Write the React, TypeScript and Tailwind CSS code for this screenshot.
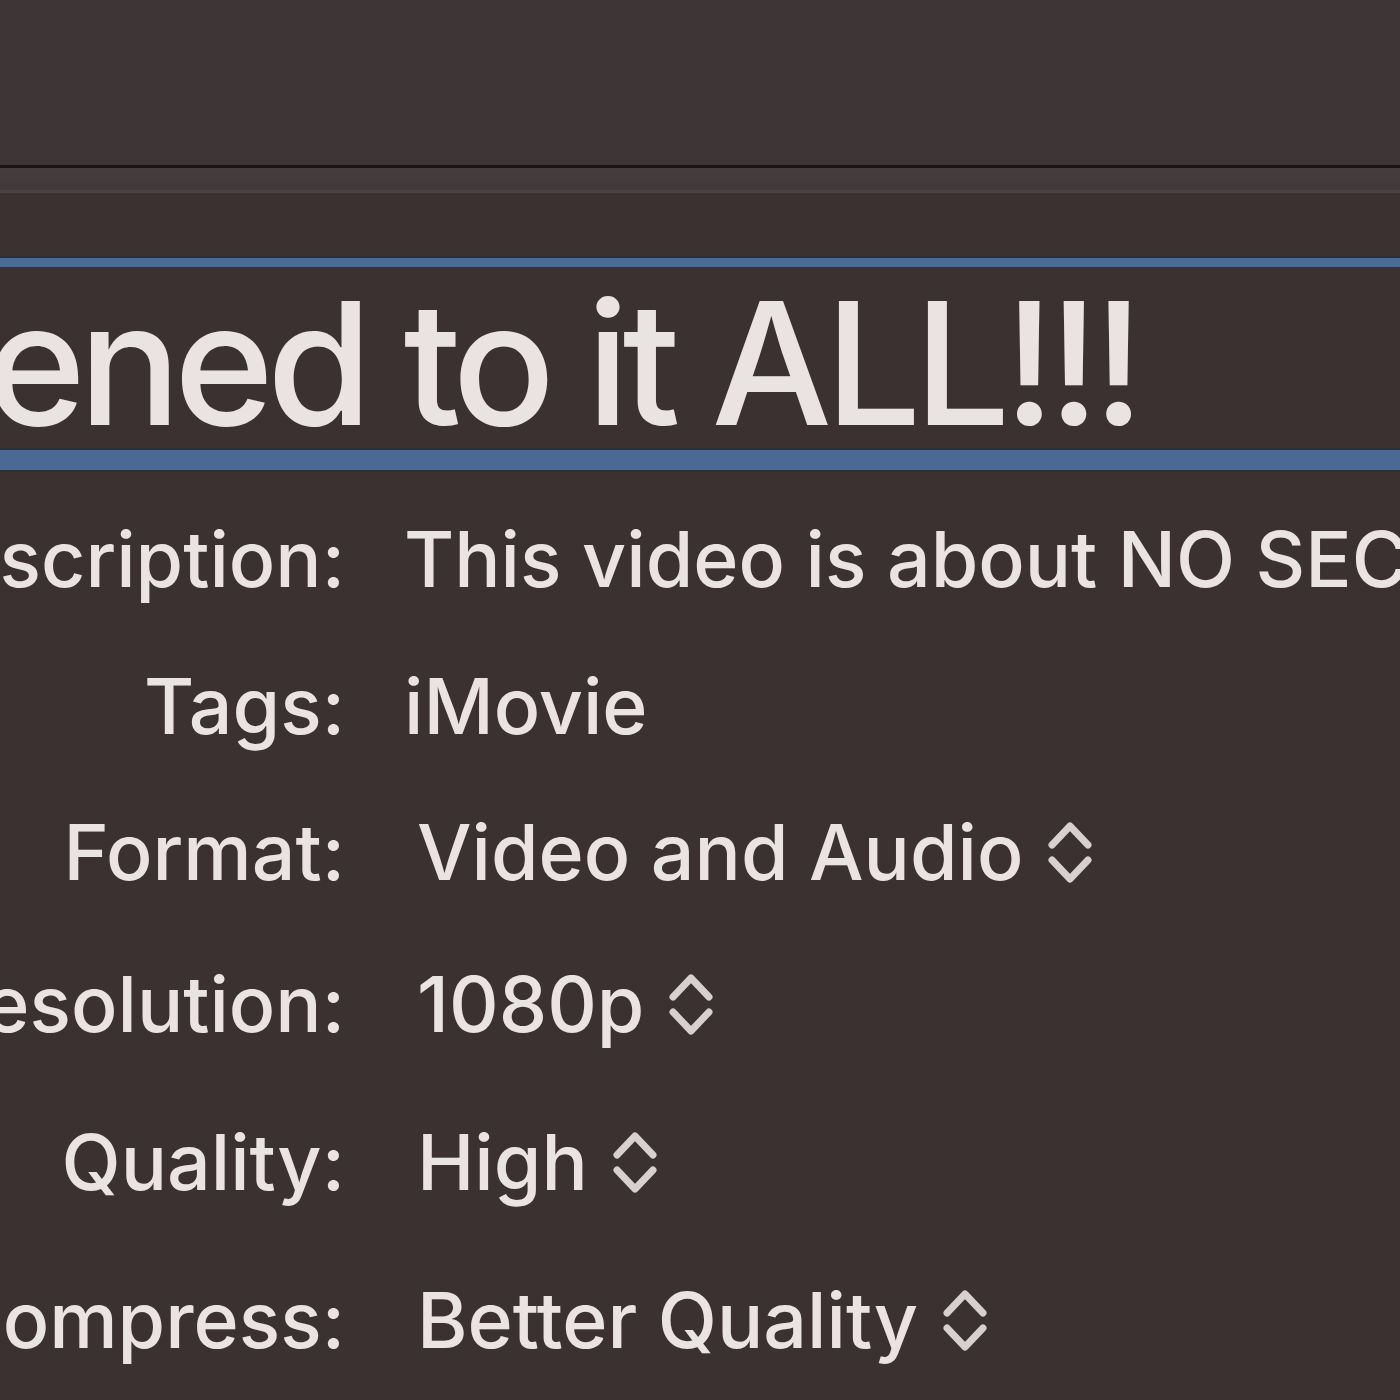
import React from "react";

const font = { fontFamily: 'Inter, "Liberation Sans", Arial, sans-serif' };

function Chevrons() {
  return (
    <svg width="46" height="70" viewBox="0 0 46 70" className="shrink-0">
      <path
        d="M5 28 L23 9 L41 28 M5 43 L23 62 L41 43"
        fill="none"
        stroke="#d7d0ce"
        strokeWidth="7"
        strokeLinecap="round"
        strokeLinejoin="round"
      />
    </svg>
  );
}

function Row({
  label,
  value,
  popup,
  height,
}: {
  label: string;
  value: string;
  popup?: boolean;
  height: string;
}) {
  return (
    <div className={`flex items-center ${height}`}>
      <div className="flex w-[345px] shrink-0 justify-end">
        <span className="shrink-0 whitespace-nowrap">{label}</span>
      </div>
      <div
        className={`ml-[59px] flex min-w-0 items-center gap-[24px] whitespace-nowrap ${
          popup ? "pl-[13px]" : ""
        }`}
      >
        <span>{value}</span>
        {popup && <Chevrons />}
      </div>
    </div>
  );
}

export default function App() {
  return (
    <div
      className="h-[1400px] w-[1400px] overflow-hidden bg-[#3a3130] text-[#e9e3e1]"
      style={font}
    >
      {/* window toolbar */}
      <div className="h-[165px] bg-[#3e3636]" />
      <div className="h-[3px] bg-[#1b1313]" />
      <div className="h-[22px] bg-gradient-to-b from-[#463e3e] to-[#423a3a]" />
      <div className="h-[3px] bg-[#4c4444]" />

      <div className="pt-[63px]">
        {/* title field, focused */}
        <div className="h-[2px] bg-[#2c2e38]" />
        <div className="h-[9px] bg-[#4b6c96]" />
        <div className="h-[181px] overflow-hidden pt-[11px]">
          <div className="ml-[-14px] whitespace-nowrap text-[170px] font-[450] leading-[170px] tracking-[-7px]">
            ened to it ALL!!!
          </div>
        </div>
        <div className="h-[2px] bg-[#2c2e38]" />
        <div className="h-[20px] bg-[#4a6a93]" />
        <div className="h-[2px] bg-[#2c2e38]" />

        {/* export settings */}
        <div className="mt-[13px] text-[77px] font-[450] leading-[148px]">
          <Row label="Description:" value="This video is about NO SECRETS" height="h-[148px]" />
          <Row label="Tags:" value="iMovie" height="h-[145px]" />
          <Row label="Format:" value="Video and Audio" popup height="h-[147px]" />
          <Row label="Resolution:" value="1080p" popup height="h-[158px]" />
          <Row label="Quality:" value="High" popup height="h-[158px]" />
          <Row label="Compress:" value="Better Quality" popup height="h-[158px]" />
        </div>
      </div>
    </div>
  );
}
